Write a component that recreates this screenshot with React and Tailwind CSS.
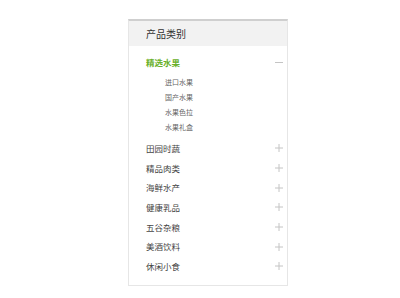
import React from "react";

const subs = ["进口水果", "国产水果", "水果色拉", "水果礼盒"];
const cats = ["田园时蔬", "精品肉类", "海鲜水产", "健康乳品", "五谷杂粮", "美酒饮料", "休闲小食"];

function Plus() {
  return (
    <svg width="8" height="8" viewBox="0 0 8 8" className="block">
      <path d="M4 0V8M0 4H8" stroke="#c4c4c4" strokeWidth="1" />
    </svg>
  );
}

export default function App() {
  return (
    <div
      className="w-[400px] h-[298px] bg-white pt-[19px] pl-[128px]"
      style={{ fontFamily: '"Noto Sans CJK SC", "Noto Sans", sans-serif' }}
    >
      <div className="w-[160px] h-[267px] border border-[#e6e6e6] border-t-2 border-t-[#cfcfcf] box-border">
        <div className="h-[25px] bg-[#f2f2f2] pl-[17px] flex items-center text-[10px] text-[#333]">
          产品类别
        </div>
        <div className="mt-[8px] h-[16px] pl-[17px] pr-[4px] flex items-center justify-between">
          <span className="text-[8.5px] font-bold text-[#69b02a]">精选水果</span>
          <span className="block w-[8px] h-px bg-[#c4c4c4]"></span>
        </div>
        <div className="mt-[5px] pl-[36px] flex flex-col">
          {subs.map((s) => (
            <div key={s} className="h-[15px] flex items-center text-[7px] text-[#666]">
              {s}
            </div>
          ))}
        </div>
        <div className="mt-[3.5px] flex flex-col">
          {cats.map((c) => (
            <div key={c} className="h-[19.7px] pl-[17px] pr-[4px] flex items-center justify-between">
              <span className="text-[8.5px] text-[#444]">{c}</span>
              <Plus />
            </div>
          ))}
        </div>
      </div>
    </div>
  );
}
